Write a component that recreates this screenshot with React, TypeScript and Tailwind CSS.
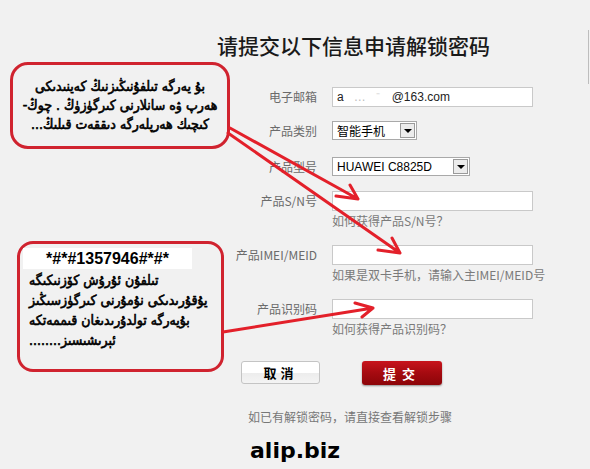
import React from "react";

const cjk = "font-['Noto_Sans_CJK_SC','Noto_Sans',sans-serif]";
const uy = "font-['DejaVu_Sans_Condensed','DejaVu_Sans',sans-serif] [-webkit-text-stroke:0.6px_black]";

function Field({ label, hint, children, className = "" }: { label: string; hint?: string; children: React.ReactNode; className?: string }) {
  return (
    <div className={`flex ${className}`}>
      <div className="w-[77px] h-[20px] flex items-center justify-end whitespace-nowrap text-[12px] leading-[14px] text-[#6b6b6b]">
        {label}
      </div>
      <div className="ml-[15px] flex flex-col">
        {children}
        {hint && <div className="mt-[3px] text-[12px] leading-[14px] text-[#7a7a7a] whitespace-nowrap">{hint}</div>}
      </div>
    </div>
  );
}

function TextBox({ children }: { children?: React.ReactNode }) {
  return (
    <div className="w-[201px] h-[20px] bg-white border border-[#c9c9c9] flex items-center px-[4px] text-[12px] font-['Liberation_Sans',sans-serif] text-[#222]">
      {children}
    </div>
  );
}

function Select({ value, width, height, font }: { value: string; width: string; height: string; font: string }) {
  return (
    <div className={`${width} ${height} bg-white border border-[#a9a9a9] flex items-center justify-between pl-[4px] pr-[1px] text-[12px] text-black ${font}`}>
      <span className="whitespace-nowrap">{value}</span>
      <span className="w-[15px] h-[15px] border border-[#9a9a9a] bg-[#ececec] flex items-center justify-center">
        <span className="w-0 h-0 border-l-[4px] border-r-[4px] border-t-[4px] border-l-transparent border-r-transparent border-t-black" />
      </span>
    </div>
  );
}

export default function App() {
  return (
    <div className={`relative w-[590px] h-[469px] overflow-hidden bg-[#f1f1f1] ${cjk}`}>
      <h1 className="pt-[35px] pl-[217px] text-[21px] leading-[21px] font-medium text-[#1a1a1a] whitespace-nowrap">
        请提交以下信息申请解锁密码
      </h1>

      <div className="flex mt-[6px]">
        {/* annotation bubbles */}
        <div className="w-[240px] flex flex-col text-black">
          <div
            dir="rtl"
            className={`ml-[10px] w-[220px] h-[87px] border-[3px] border-[#d0232f] rounded-[18px] flex flex-col items-center justify-center text-[14px] leading-[19px] text-center whitespace-nowrap ${uy}`}
          >
            <p>بۇ يەرگە تىلفۇنىڭىزنىڭ كەينىدىكى</p>
            <p>ھەرپ ۋە سانلارنى كىرگۈزۈڭ . چوڭ-</p>
            <p>كىچىك ھەرپلەرگە دىققەت قىلىڭ...</p>
          </div>
          <div className="ml-[17px] mt-[92px] w-[207px] h-[131px] border-[3px] border-[#d0232f] rounded-[16px] pt-[4px] pl-[3px]">
            <div className="w-[169px] h-[21px] bg-white flex items-center justify-center font-['Liberation_Sans',sans-serif] font-bold text-[16px] leading-none">
              *#*#1357946#*#*
            </div>
            <div dir="rtl" className={`mt-[1px] pl-[6px] text-[14px] leading-[20px] flex flex-col items-end whitespace-nowrap ${uy}`}>
              <p>تىلفۇن ئۇرۇش كۆزنىكىگە</p>
              <p>يۇقۇرىدىكى نۇمۇرنى كىرگۈزسىڭىز</p>
              <p>بۇيەرگە تولدۇرىدىغان قىممەتكە</p>
              <p>ئېرىشىسىز........</p>
            </div>
          </div>
        </div>

        {/* form */}
        <div className="flex flex-col">
          <Field label="电子邮箱" className="mt-[25px]">
            <TextBox>
              <span>a</span>
              <span className="ml-[10px] text-[#bbb]">…</span>
              <span className="ml-[10px] text-[#ccc]">⁻</span>
              <span className="ml-[12px]">@163.com</span>
            </TextBox>
          </Field>
          <Field label="产品类别" className="mt-[14px]">
            <Select value="智能手机" width="w-[85px]" height="h-[19px]" font={cjk} />
          </Field>
          <Field label="产品型号" className="mt-[16px]">
            <Select value="HUAWEI C8825D" width="w-[138px]" height="h-[19px]" font="font-['Liberation_Sans',sans-serif]" />
          </Field>
          <Field label="产品S/N号" hint="如何获得产品S/N号？" className="mt-[14px]">
            <TextBox />
          </Field>
          <Field label="产品IMEI/MEID" hint="如果是双卡手机，请输入主IMEI/MEID号" className="mt-[17px]">
            <TextBox />
          </Field>
          <Field label="产品识别码" hint="如何获得产品识别码？" className="mt-[17px]">
            <TextBox />
          </Field>

          <div className="mt-[25px] ml-[1px] flex gap-[42px]">
            <button className="w-[79px] h-[23px] rounded-[3px] border border-[#c4c4c4] bg-[linear-gradient(#ffffff_0%,#ffffff_50%,#ececec_51%,#f4f4f4_100%)] text-[13px] font-bold tracking-[4px] text-black leading-none">
              取消
            </button>
            <button className="w-[80px] h-[24px] rounded-[3px] bg-[linear-gradient(#c8141c_0%,#a50a10_50%,#8c0509_100%)] shadow-[0_1px_2px_rgba(0,0,0,0.4)] text-[13px] font-bold tracking-[6px] text-white leading-none">
              提交
            </button>
          </div>

          <p className="mt-[25px] ml-[8px] text-[12px] leading-[14px] text-[#777] whitespace-nowrap">
            如已有解锁密码，请直接查看解锁步骤
          </p>
          <p className="mt-[16px] ml-[10px] font-['DejaVu_Sans',sans-serif] font-bold text-[22px] leading-[22px] text-black">
            alip.biz
          </p>
        </div>
      </div>

      <div className="absolute right-0 top-[30px] w-[2px] h-[54px] border-l border-[#bdbdbd]" />

      <svg className="absolute inset-0 pointer-events-none" width="590" height="469" viewBox="0 0 590 469" fill="none" stroke="#e3202a" strokeWidth="3" strokeLinecap="round" strokeLinejoin="round">
        <path d="M230 128 L358 199 M336 196 L358 199 L350 185" />
        <path d="M228 133 L400 253 M378 250 L400 253 L392 238" />
        <path d="M223 332 L373 308 M355 303 L373 308 L362 317" />
      </svg>
    </div>
  );
}
